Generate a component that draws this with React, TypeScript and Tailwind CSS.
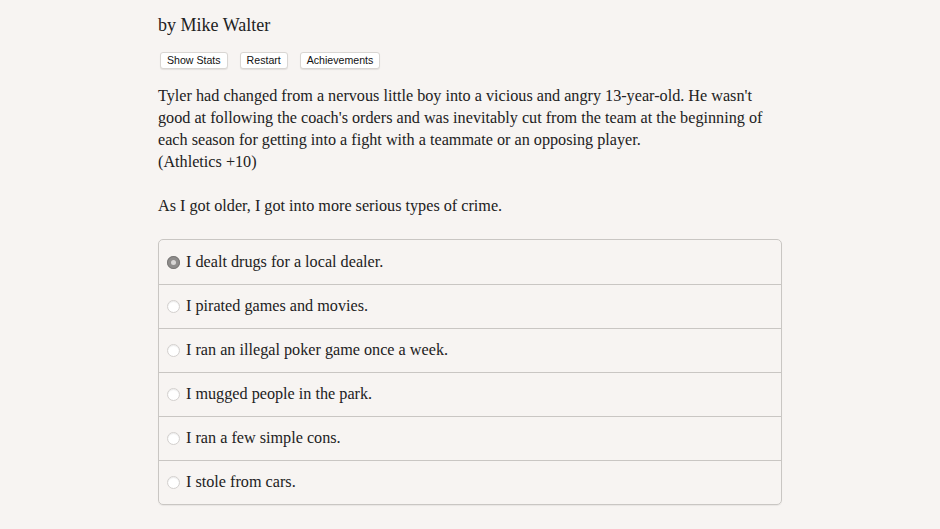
import React from "react";

const serif = { fontFamily: '"Liberation Serif", "Times New Roman", serif' };

const choices = [
  "I dealt drugs for a local dealer.",
  "I pirated games and movies.",
  "I ran an illegal poker game once a week.",
  "I mugged people in the park.",
  "I ran a few simple cons.",
  "I stole from cars.",
];

function Btn({ children }: { children: React.ReactNode }) {
  return (
    <button
      className="h-[17px] px-[6px] bg-white border border-[#d9d6d3] rounded-[3px] shadow-[0_1px_1px_rgba(0,0,0,0.08)] text-[10.6px] leading-[15px] text-[#111]"
      style={{ fontFamily: '"Liberation Sans", Arial, sans-serif' }}
    >
      {children}
    </button>
  );
}

export default function App() {
  return (
    <div className="w-[940px] h-[529px] overflow-hidden bg-[#f7f4f2] text-[#222]" style={serif}>
      <div className="ml-[158px] w-[624px] pt-[14px]">
        <div className="text-[18px] leading-[22px] text-[#222]">by Mike Walter</div>
        <div className="flex gap-[12px] mt-[16px] ml-[2px]">
          <Btn>Show Stats</Btn>
          <Btn>Restart</Btn>
          <Btn>Achievements</Btn>
        </div>
        <p className="mt-[16px] text-[16.2px] leading-[22px]">
          Tyler had changed from a nervous little boy into a vicious and angry 13-year-old. He wasn't
          <br />
          good at following the coach's orders and was inevitably cut from the team at the beginning of
          <br />
          each season for getting into a fight with a teammate or an opposing player.
          <br />
          (Athletics +10)
        </p>
        <p className="mt-[22px] text-[16.2px] leading-[22px]">
          As I got older, I got into more serious types of crime.
        </p>
        <div className="mt-[22px] border border-[#c9c6c3] rounded-[5px] shadow-[0_1px_1px_rgba(0,0,0,0.06)]">
          {choices.map((c, i) => (
            <div
              key={i}
              className={`h-[44px] flex items-center pl-[8px] text-[16.2px] ${i > 0 ? "border-t border-[#c9c6c3]" : ""}`}
            >
              {i === 0 ? (
                <span className="w-[13px] h-[13px] rounded-full bg-[#8e8c8b] flex items-center justify-center shadow-[inset_0_0_0_1px_#7a7877]">
                  <span className="w-[5px] h-[5px] rounded-full bg-[#d8d6d5]" />
                </span>
              ) : (
                <span className="w-[13px] h-[13px] rounded-full bg-white border border-[#d3d0ce] shadow-[inset_0_1px_1px_rgba(0,0,0,0.08)]" />
              )}
              <span className="ml-[6px]">{c}</span>
            </div>
          ))}
        </div>
      </div>
    </div>
  );
}
